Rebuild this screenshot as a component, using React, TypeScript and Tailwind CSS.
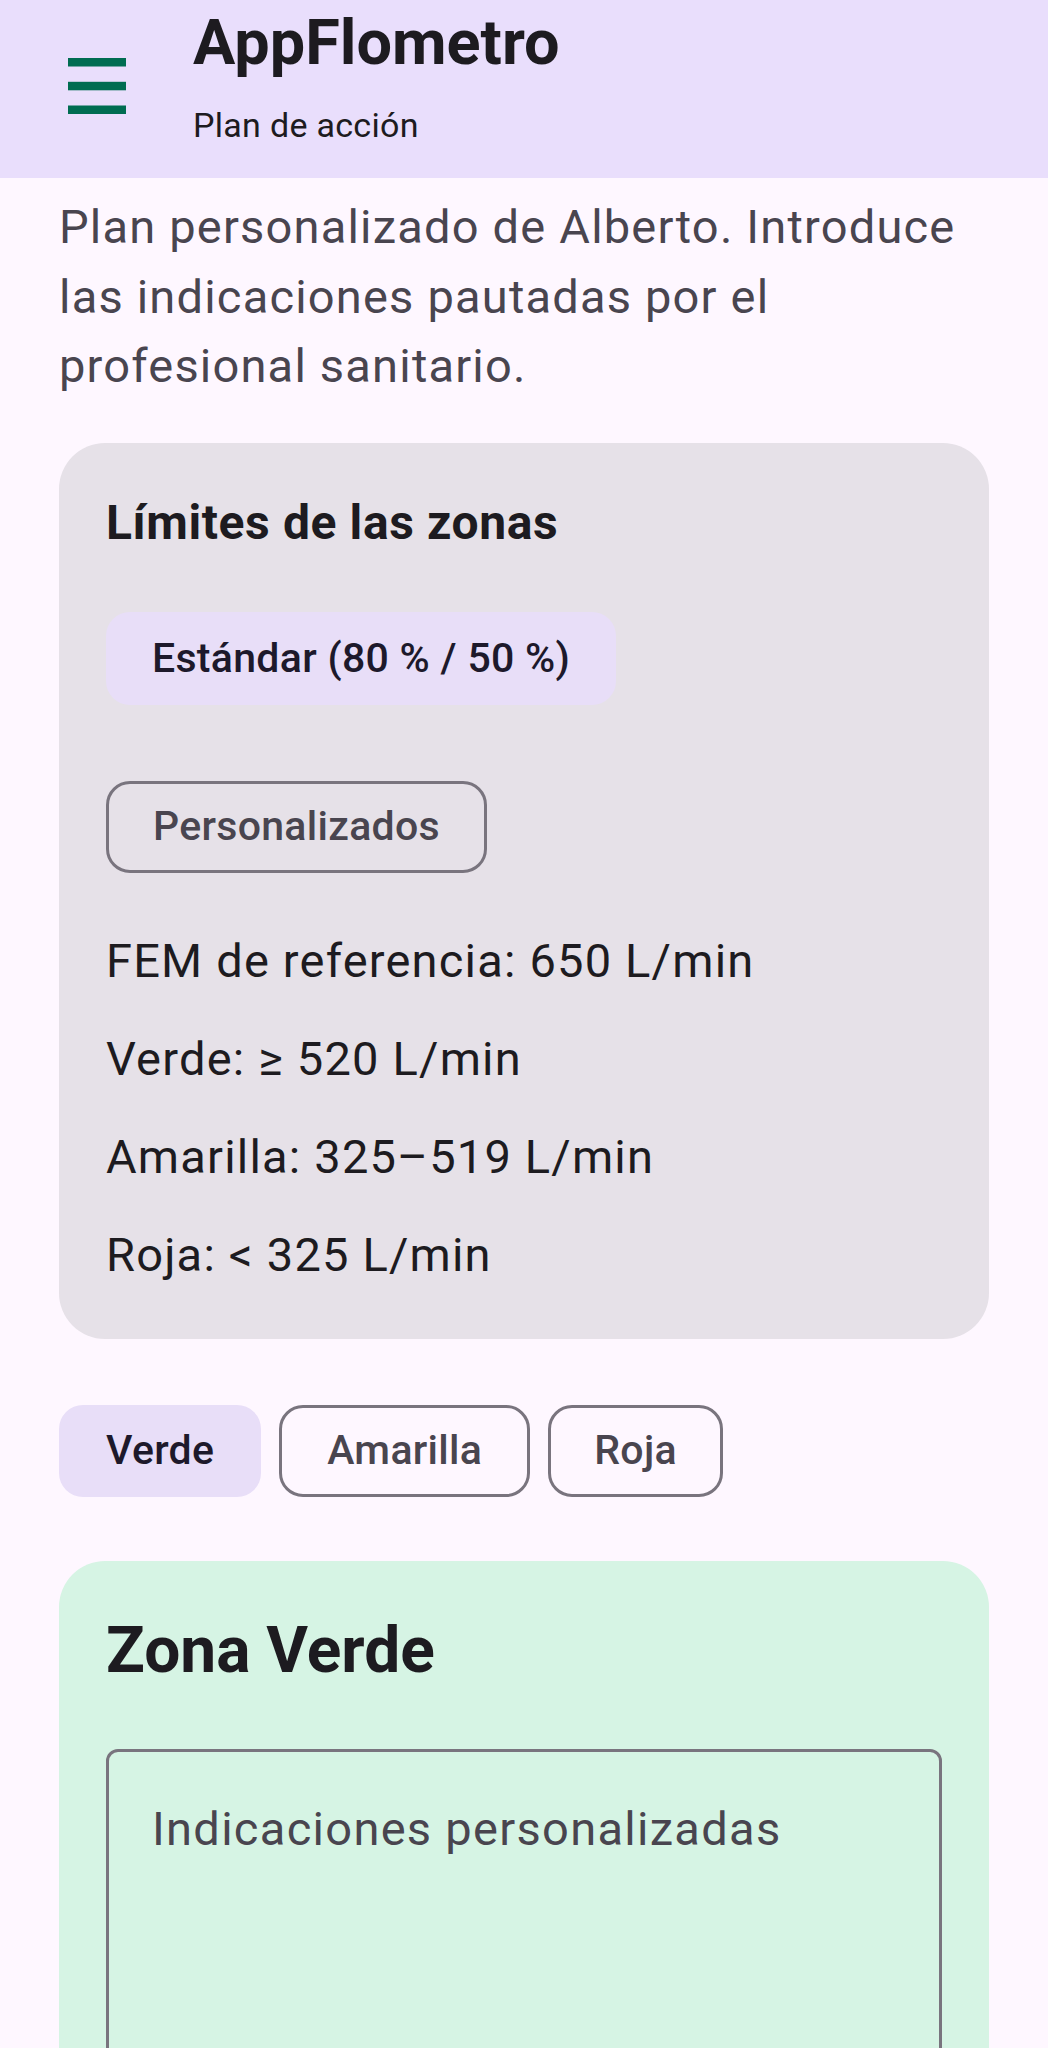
import React from "react";

function MenuIcon() {
  return (
    <svg width="58" height="56" viewBox="0 0 58 56" className="block">
      <rect x="0" y="0" width="58" height="8.5" fill="#006C51" />
      <rect x="0" y="23.8" width="58" height="8.5" fill="#006C51" />
      <rect x="0" y="47.5" width="58" height="8.5" fill="#006C51" />
    </svg>
  );
}

export default function App() {
  return (
    <div className="min-h-[2048px] bg-[#FEF7FF] font-['Roboto',sans-serif] text-[#1D1B20]">
      <header className="h-[178px] bg-[#E9DEFC] flex">
        <div className="pl-[68px] pt-[58px] w-[193px] shrink-0">
          <MenuIcon />
        </div>
        <div className="flex flex-col pt-[6px]">
          <div className="text-[63px] leading-[74px] font-bold text-[#1D1B20]">AppFlometro</div>
          <div className="mt-[23px] text-[34px] leading-[44px] tracking-[0.3px] text-[#1D1B20]">Plan de acción</div>
        </div>
      </header>

      <main className="px-[59px] pt-[14px] flex flex-col">
        <p className="text-[47px] leading-[69.5px] tracking-[1.2px] text-[#49454F]">
          Plan personalizado de Alberto. Introduce las indicaciones pautadas por el profesional sanitario.
        </p>

        <section className="mt-[42px] bg-[#E6E1E8] rounded-[46px] px-[47px] pt-[48px] pb-[55px] flex flex-col items-start">
          <h2 className="text-[48px] leading-[64px] font-bold tracking-[0.6px] text-[#1D1B20]">Límites de las zonas</h2>
          <div className="mt-[57px] h-[93px] px-[46px] flex items-center rounded-[24px] bg-[#E8DEF8] text-[41px] leading-[59px] font-medium tracking-[0.3px] text-[#1D192B]">
            Estándar (80 % / 50 %)
          </div>
          <div className="mt-[76px] h-[92px] px-[44px] flex items-center rounded-[24px] border-[3px] border-[#79747E] text-[41px] leading-[59px] font-medium tracking-[0.3px] text-[#49454F]">
            Personalizados
          </div>
          <div className="mt-[58px] flex flex-col gap-[39px] text-[47px] leading-[59px] tracking-[1.2px] text-[#1D1B20]">
            <div>FEM de referencia: 650 L/min</div>
            <div>Verde: ≥ 520 L/min</div>
            <div>Amarilla: 325–519 L/min</div>
            <div>Roja: &lt; 325 L/min</div>
          </div>
        </section>

        <div className="mt-[66px] flex gap-[18px] text-[41px] leading-[59px] font-medium tracking-[0.3px]">
          <div className="h-[92px] px-[47px] flex items-center rounded-[24px] bg-[#E8DEF8] text-[#1D192B]">Verde</div>
          <div className="h-[92px] px-[45px] flex items-center rounded-[24px] border-[3px] border-[#79747E] text-[#49454F]">Amarilla</div>
          <div className="h-[92px] px-[43px] flex items-center rounded-[24px] border-[3px] border-[#79747E] text-[#49454F]">Roja</div>
        </div>

        <section className="mt-[64px] bg-[#D6F4E4] rounded-[46px] px-[47px] pt-[50px] pb-[60px] flex flex-col">
          <h2 className="text-[64px] leading-[80px] font-bold text-[#1D1B20]">Zona Verde</h2>
          <div className="mt-[58px] h-[420px] rounded-[12px] border-[3px] border-[#79747E] px-[43px] pt-[42px]">
            <div className="text-[47px] leading-[70px] tracking-[1.3px] text-[#49454F]">Indicaciones personalizadas</div>
          </div>
        </section>
      </main>
    </div>
  );
}
